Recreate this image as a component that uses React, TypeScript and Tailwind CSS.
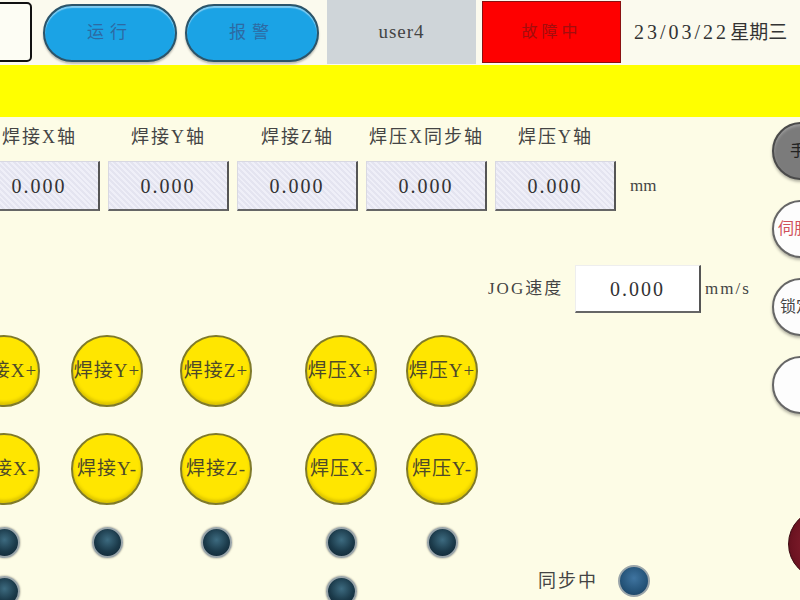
import React from 'react';

const serif = "font-['Liberation_Serif','Noto_Sans_CJK_SC',serif]";

const axes = ['焊接X轴', '焊接Y轴', '焊接Z轴', '焊压X同步轴', '焊压Y轴'];

type JogCol = { plus: string; minus: string; ml: string; extraDot?: boolean };

const jogCols: JogCol[] = [
  { plus: '焊接X+', minus: '焊接X-', ml: 'ml-[-32px]', extraDot: true },
  { plus: '焊接Y+', minus: '焊接Y-', ml: 'ml-[31px]' },
  { plus: '焊接Z+', minus: '焊接Z-', ml: 'ml-[37px]' },
  { plus: '焊压X+', minus: '焊压X-', ml: 'ml-[53px]', extraDot: true },
  { plus: '焊压Y+', minus: '焊压Y-', ml: 'ml-[29px]' },
];

const JogButton: React.FC<{ label: string; className?: string }> = ({ label, className = '' }) => (
  <button
    className={`w-[72px] h-[72px] rounded-full bg-[#ffe600] border-2 border-[#7f7a2a] shadow-[inset_0_-3px_3px_rgba(120,100,0,0.25)] flex items-center justify-center overflow-visible ${className}`}
  >
    <span className={`${serif} text-[19px] tracking-[1px] whitespace-nowrap text-[#4d4a2a]`}>{label}</span>
  </button>
);

const Lamp: React.FC<{ className?: string }> = ({ className = '' }) => (
  <div
    className={`w-[31px] h-[31px] rounded-full border-2 border-[#9aa5aa] bg-[radial-gradient(circle_at_50%_40%,#3d6b80_0%,#1b3a4a_55%,#0e2230_100%)] shadow-[0_0_2px_rgba(0,0,0,0.5)] ${className}`}
  />
);

export default function App() {
  return (
    <div className={`w-[800px] h-[600px] overflow-hidden bg-[#fdfce6] text-[#3a3a3a] ${serif}`}>
      {/* Header */}
      <div className="h-[65px] flex items-start bg-[#fbfaee]">
        <div className="ml-[-30px] mt-[2px] w-[62px] h-[60px] rounded-[5px] border-2 border-[#111] bg-[#fdfdf4] shrink-0" />
        <button className="ml-[11px] mt-[4px] w-[134px] h-[58px] shrink-0 rounded-full bg-[#1ba3e5] border-2 border-[#2c5469] shadow-[inset_0_2px_1px_rgba(255,255,255,0.45),0_2px_2px_rgba(0,0,0,0.25)] text-[17px] tracking-[6px] text-[#2d6aa3]">
          运行
        </button>
        <button className="ml-[8px] mt-[4px] w-[134px] h-[58px] shrink-0 rounded-full bg-[#1ba3e5] border-2 border-[#2c5469] shadow-[inset_0_2px_1px_rgba(255,255,255,0.45),0_2px_2px_rgba(0,0,0,0.25)] text-[17px] tracking-[6px] text-[#2d6aa3]">
          报警
        </button>
        <div className="ml-[8px] w-[149px] h-[64px] shrink-0 bg-[#cfd5d9] flex items-center justify-center text-[19px] tracking-[1px] text-[#444]">
          user4
        </div>
        <div className="ml-[6px] mt-[1px] w-[139px] h-[62px] shrink-0 bg-[#fe0000] border border-[#8a1010] flex items-center justify-center text-[16px] tracking-[4px] text-[#a30d0d]">
          故障中
        </div>
        <div className="ml-[13px] self-center whitespace-nowrap text-[#333]">
          <span className="text-[20px] tracking-[3px]">23/03/22</span>
          <span className="ml-[1px] text-[19px]">星期三</span>
        </div>
      </div>

      {/* Alarm bar */}
      <div className="h-[52px] bg-[#ffff00]" />

      {/* Main */}
      <div className="flex">
        <div className="w-[772px] shrink-0 flex flex-col">
          {/* Axis positions */}
          <div className="mt-[8px] flex items-end">
            <div className="ml-[-21px] flex gap-[8px]">
              {axes.map((a) => (
                <div key={a} className="flex flex-col items-center">
                  <div className="h-[24px] leading-[24px] text-[18px] tracking-[2px] whitespace-nowrap text-[#444]">{a}</div>
                  <div className="mt-[12px] w-[121px] h-[50px] flex items-center justify-center bg-[repeating-linear-gradient(45deg,#e4e4f0_0px,#e4e4f0_2px,#efeff8_2px,#efeff8_4px)] border-t border-l border-[#d8d8e2] border-r-2 border-b-2 border-r-[#555] border-b-[#666] text-[20px] tracking-[2px] text-[#333]">
                    0.000
                  </div>
                </div>
              ))}
            </div>
            <div className="ml-[14px] h-[50px] flex items-center text-[17px] text-[#444]">mm</div>
          </div>

          {/* JOG speed */}
          <div className="mt-[54px] flex items-center">
            <div className="ml-[488px] w-[76px] text-[17px] tracking-[2px] whitespace-nowrap text-[#444]">JOG速度</div>
            <div className="ml-[11px] w-[126px] h-[48px] flex items-center justify-center bg-white border-t border-l border-[#eee] border-r-2 border-b-2 border-r-[#555] border-b-[#666] text-[20px] tracking-[2px] text-[#333]">
              0.000
            </div>
            <div className="ml-[4px] text-[17px] tracking-[2px] text-[#444]">mm/s</div>
          </div>

          {/* Jog buttons */}
          <div className="mt-[22px] flex items-start">
            {jogCols.map((c) => (
              <div key={c.plus} className={`${c.ml} w-[72px] shrink-0 flex flex-col items-center`}>
                <JogButton label={c.plus} />
                <JogButton label={c.minus} className="mt-[26px]" />
                <Lamp className="mt-[22px]" />
                {c.extraDot && <Lamp className="mt-[18px]" />}
              </div>
            ))}
            <div className="ml-[60px] mt-[230px] flex items-center shrink-0">
              <span className="text-[18px] tracking-[2px] whitespace-nowrap text-[#444]">同步中</span>
              <div className="ml-[20px] w-[32px] h-[32px] rounded-full border-2 border-[#9aa5aa] bg-[radial-gradient(circle_at_50%_40%,#3f74a0_0%,#245378_60%,#173a58_100%)]" />
            </div>
          </div>
        </div>

        {/* Right function buttons */}
        <div className="w-[90px] shrink-0 flex flex-col">
          <button className="mt-[5px] w-[58px] h-[58px] rounded-full bg-[#7b7b7b] border-2 border-[#4a4a4a] shadow-[inset_0_2px_3px_rgba(255,255,255,0.25),0_2px_3px_rgba(0,0,0,0.3)] flex items-center justify-start pl-[16px] text-[16px] text-[#222] whitespace-nowrap">
            手动
          </button>
          <button className="mt-[20px] w-[58px] h-[58px] rounded-full bg-[#fdfdfd] border-2 border-[#666] shadow-[0_2px_3px_rgba(0,0,0,0.3)] flex items-center justify-start pl-[4px] text-[16px] text-[#d0505a] whitespace-nowrap">
            伺服
          </button>
          <button className="mt-[20px] w-[58px] h-[58px] rounded-full bg-[#fdfdfd] border-2 border-[#666] shadow-[0_2px_3px_rgba(0,0,0,0.3)] flex items-center justify-start pl-[6px] text-[16px] text-[#444] whitespace-nowrap">
            锁定
          </button>
          <button className="mt-[20px] w-[58px] h-[58px] rounded-full bg-[#fdfdfd] border-2 border-[#666] shadow-[0_2px_3px_rgba(0,0,0,0.3)]" />
          <div className="mt-[95px] ml-[16px] w-[70px] h-[70px] rounded-full bg-[radial-gradient(circle_at_60%_50%,#9a2a3a_0%,#6e1422_70%,#4a0a14_100%)] border border-[#3a0810]" />
        </div>
      </div>
    </div>
  );
}
